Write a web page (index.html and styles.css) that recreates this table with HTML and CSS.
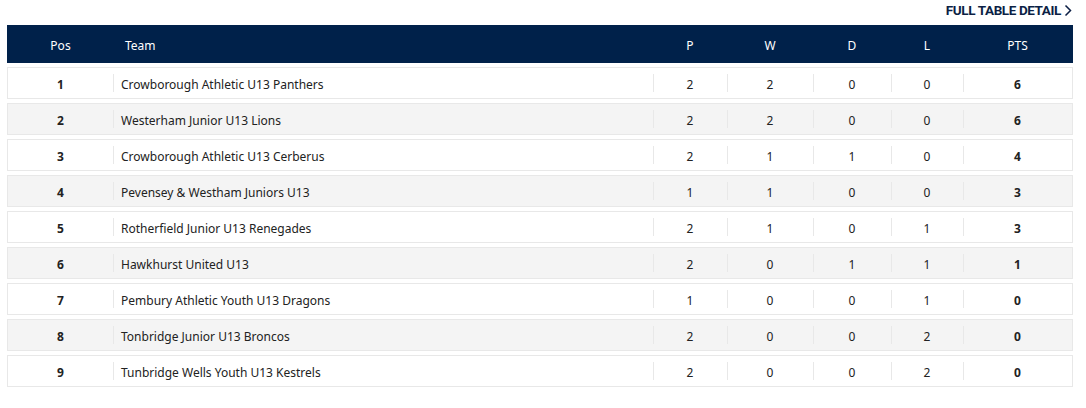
FILE: index.html
```html
<!DOCTYPE html>
<html>
<head>
<meta charset="utf-8">
<link rel="stylesheet" href="styles.css">
</head>
<body>
<div class="wrap">
  <div class="top">
    <a class="detail" href="#">FULL TABLE DETAIL <svg class="chev" width="8" height="13" viewBox="0 0 8 13"><path d="M1.5 1.5 L6.5 6.5 L1.5 11.5" fill="none" stroke="#0c1f45" stroke-width="1.5"/></svg></a>
  </div>
  <div class="table">
    <div class="head">
      <div class="c pos">Pos</div>
      <div class="c team">Team</div>
      <div class="c num">P</div>
      <div class="c num">W</div>
      <div class="c num">D</div>
      <div class="c num">L</div>
      <div class="c num">PTS</div>
    </div>
    <div class="row odd"><div class="c pos">1</div><div class="c team">Crowborough Athletic U13 Panthers</div><div class="c num">2</div><div class="c num">2</div><div class="c num">0</div><div class="c num">0</div><div class="c num pts">6</div></div>
    <div class="row even"><div class="c pos">2</div><div class="c team">Westerham Junior U13 Lions</div><div class="c num">2</div><div class="c num">2</div><div class="c num">0</div><div class="c num">0</div><div class="c num pts">6</div></div>
    <div class="row odd"><div class="c pos">3</div><div class="c team">Crowborough Athletic U13 Cerberus</div><div class="c num">2</div><div class="c num">1</div><div class="c num">1</div><div class="c num">0</div><div class="c num pts">4</div></div>
    <div class="row even"><div class="c pos">4</div><div class="c team">Pevensey &amp; Westham Juniors U13</div><div class="c num">1</div><div class="c num">1</div><div class="c num">0</div><div class="c num">0</div><div class="c num pts">3</div></div>
    <div class="row odd"><div class="c pos">5</div><div class="c team">Rotherfield Junior U13 Renegades</div><div class="c num">2</div><div class="c num">1</div><div class="c num">0</div><div class="c num">1</div><div class="c num pts">3</div></div>
    <div class="row even"><div class="c pos">6</div><div class="c team">Hawkhurst United U13</div><div class="c num">2</div><div class="c num">0</div><div class="c num">1</div><div class="c num">1</div><div class="c num pts">1</div></div>
    <div class="row odd"><div class="c pos">7</div><div class="c team">Pembury Athletic Youth U13 Dragons</div><div class="c num">1</div><div class="c num">0</div><div class="c num">0</div><div class="c num">1</div><div class="c num pts">0</div></div>
    <div class="row even"><div class="c pos">8</div><div class="c team">Tonbridge Junior U13 Broncos</div><div class="c num">2</div><div class="c num">0</div><div class="c num">0</div><div class="c num">2</div><div class="c num pts">0</div></div>
    <div class="row odd"><div class="c pos">9</div><div class="c team">Tunbridge Wells Youth U13 Kestrels</div><div class="c num">2</div><div class="c num">0</div><div class="c num">0</div><div class="c num">2</div><div class="c num pts">0</div></div>
  </div>
</div>
</body>
</html>
```
FILE: styles.css
```css
html, body {
  margin: 0;
  padding: 0;
  background: #fff;
}
body {
  font-family: "Noto Sans", "Open Sans", sans-serif;
  font-size: 12px;
  color: #222;
}
.wrap {
  margin: 0 13px 0 7px;
}
.top {
  height: 25px;
  display: flex;
  justify-content: flex-end;
  align-items: flex-start;
}
.detail {
  margin-top: 2px;
  font-family: Roboto, "Liberation Sans", sans-serif;
  font-weight: 700;
  font-size: 13.5px;
  letter-spacing: -0.4px;
  color: #0c1f45;
  text-decoration: none;
  display: flex;
  align-items: center;
  gap: 3px;
  line-height: 16px;
}
.chev {
  display: block;
  margin-right: 1px;
}
.table {
  display: flex;
  flex-direction: column;
  gap: 4px;
}
.head, .row {
  display: grid;
  grid-template-columns: 105px 540px 74px 86px 78px 72px 109px;
  align-items: center;
}
.head {
  background: #00214a;
  color: #fff;
  height: 38px;
  padding: 0 1px;
}
.head .team {
  padding-left: 12px;
}
.row {
  border: 1px solid #e8e8e8;
  padding: 6px 0;
  box-sizing: border-box;
  height: 32px;
}
.odd { background: #fff; }
.even { background: #f4f4f4; }
.c {
  line-height: 18px;
  height: 18px;
  padding-top: 2px;
  box-sizing: border-box;
  white-space: nowrap;
}
.pos, .num {
  text-align: center;
}
.row .num {
  padding-right: 1px;
}
.team {
  padding-left: 7px;
}
.row .team, .row .num {
  border-left: 1px solid #e8e8e8;
}
.row .pos, .row .pts {
  font-weight: 700;
}
```
